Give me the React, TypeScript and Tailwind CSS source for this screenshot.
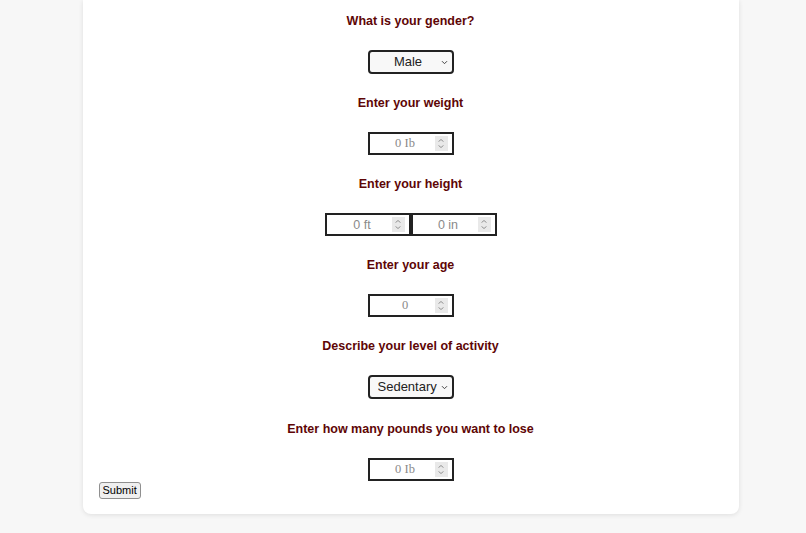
import React from 'react'

const sans = "[font-family:'Liberation_Sans',Arial,sans-serif]"
const serif = "[font-family:'Liberation_Serif','Times_New_Roman',serif]"
const heading = `text-[12.5px] leading-[18px] font-bold text-[#5e0606] text-center ${sans}`

function Chevron() {
  return (
    <svg width="7" height="5" viewBox="0 0 7 5" className="shrink-0">
      <path d="M1 1.2l2.5 2.5 2.5-2.5" fill="none" stroke="#444" strokeWidth="1" />
    </svg>
  )
}

function Spinner() {
  return (
    <div className="w-[13px] h-[15px] bg-[#e9e9e9] flex flex-col items-center justify-center gap-[3px] shrink-0">
      <svg width="6" height="3" viewBox="0 0 6 3"><path d="M0.5 2.6L3 0.5l2.5 2.1" fill="none" stroke="#888" strokeWidth="0.9" /></svg>
      <svg width="6" height="3" viewBox="0 0 6 3"><path d="M0.5 0.4L3 2.5l2.5-2.1" fill="none" stroke="#888" strokeWidth="0.9" /></svg>
    </div>
  )
}

function Dropdown({ value, options, center }: { value: string; options: string[]; center?: boolean }) {
  return (
    <label className="w-[86px] h-[24px] border-2 border-[#222] rounded-[4px] bg-[#f8f8f8] flex items-center pr-[4px]">
      <select
        defaultValue={value}
        className={`appearance-none bg-transparent outline-none flex-1 min-w-0 h-full text-[13px] text-[#222] ${center ? 'text-center pl-[6px]' : 'pl-[8px]'} ${sans}`}
      >
        {options.map((o) => (
          <option key={o}>{o}</option>
        ))}
      </select>
      <Chevron />
    </label>
  )
}

function NumBox({ placeholder, font }: { placeholder: string; font: string }) {
  return (
    <label className="w-[86px] h-[23px] border-2 border-[#222] bg-white flex items-center pr-[4px]">
      <input
        type="number"
        placeholder={placeholder}
        className={`flex-1 min-w-0 h-full pl-[6px] bg-transparent outline-none text-center text-[12.5px] text-[#222] placeholder:text-[#8a8a8a] [appearance:textfield] [&::-webkit-inner-spin-button]:appearance-none ${font}`}
      />
      <Spinner />
    </label>
  )
}

export default function App() {
  return (
    <div className="min-h-[533px] bg-[#f7f7f7] flex justify-center pl-[15px]">
      <div className="w-[656px] h-fit bg-white rounded-b-[8px] shadow-[0_1px_5px_rgba(0,0,0,0.1)] px-4 pt-[12px] pb-[15px]">
        <form className="flex flex-col items-center gap-5" onSubmit={(e) => e.preventDefault()}>
          <h3 className={heading}>What is your gender?</h3>
          <Dropdown value="Male" options={['Male', 'Female']} center />

          <h3 className={heading}>Enter your weight</h3>
          <NumBox placeholder="0 Ib" font={serif} />

          <h3 className={heading}>Enter your height</h3>
          <div className="flex">
            <NumBox placeholder="0 ft" font={sans} />
            <NumBox placeholder="0 in" font={sans} />
          </div>

          <h3 className={heading}>Enter your age</h3>
          <NumBox placeholder="0" font={serif} />

          <h3 className={heading}>Describe your level of activity</h3>
          <Dropdown value="Sedentary" options={['Sedentary', 'Lightly active', 'Moderately active', 'Very active']} />

          <h3 className={`${heading} mt-[1px]`}>Enter how many pounds you want to lose</h3>
          <NumBox placeholder="0 Ib" font={serif} />
        </form>
        <button className={`block mt-[1px] bg-[#efefef] border border-[#8f8f8f] rounded-[3px] px-[3px] h-[17px] text-[11px] leading-[15px] text-black ${sans}`}>
          Submit
        </button>
      </div>
    </div>
  )
}
